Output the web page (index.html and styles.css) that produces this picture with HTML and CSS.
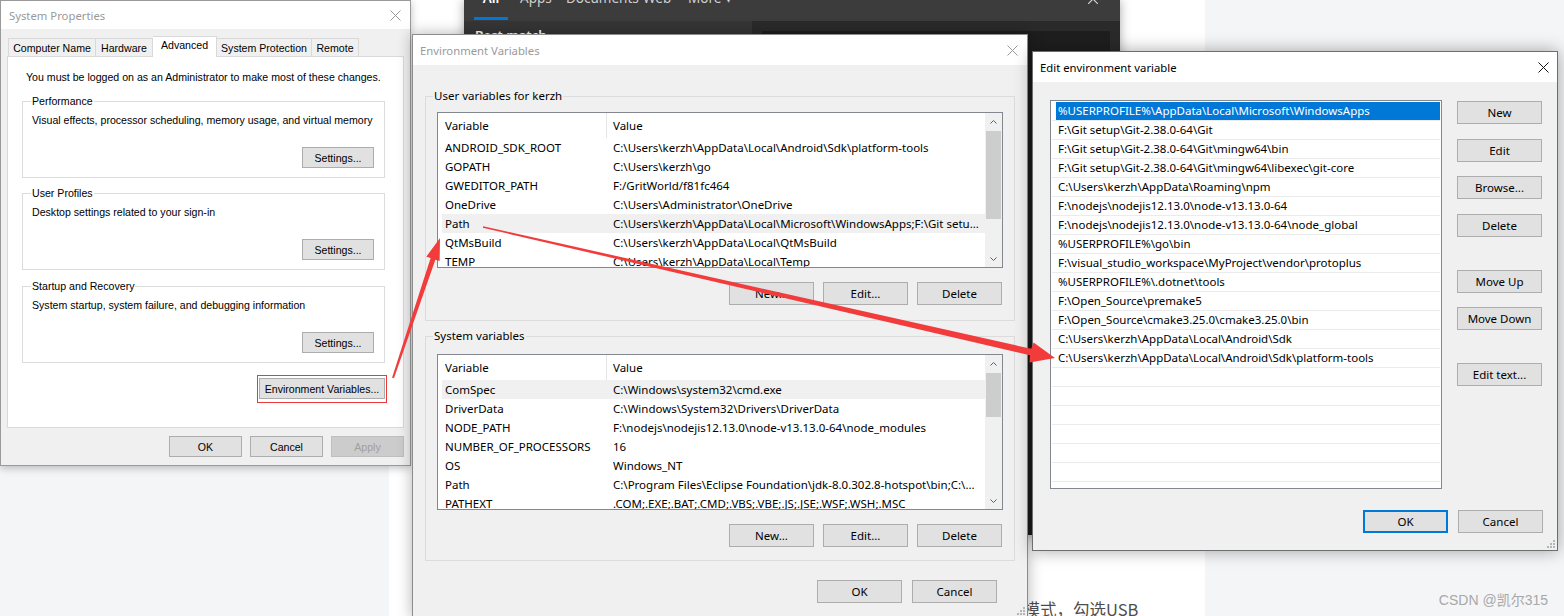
FILE: index.html
```html
<!DOCTYPE html>
<html>
<head>
<meta charset="utf-8">
<title>Environment Variables</title>
<link rel="stylesheet" href="styles.css">
</head>
<body>
<div class="page-col"></div>
<div class="article-text">者模式，勾选USB</div>
<div class="watermark">CSDN @凯尔315</div>

<div class="search-win">
  <div class="sw-head">
    <div class="sw-tabs">
      <span class="sw-tab active t1">All</span>
      <span class="sw-tab t2">Apps</span>
      <span class="sw-tab t3">Documents</span>
      <span class="sw-tab t4">Web</span>
      <span class="sw-tab t5">More ▾</span>
    </div>
    <svg class="sw-x" width="10" height="10" viewBox="0 0 10 10"><path d="M0 0L10 10M10 0L0 10" stroke="#d0d0d0" stroke-width="1.2"/></svg>
  </div>
  <div class="sw-main">
    <div class="sw-left"><div class="sw-best">Best match</div></div>
    <div class="sw-right"><div class="sw-preview"></div></div>
  </div>
</div>

<!-- System Properties -->
<div class="dlg sp">
  <div class="titlebar">
    <span class="title inactive">System Properties</span>
    <svg class="close" width="11" height="11" viewBox="0 0 11 11"><path d="M0.5 0.5L10.5 10.5M10.5 0.5L0.5 10.5" stroke="#999" stroke-width="1"/></svg>
  </div>
  <div class="sp-body">
    <div class="tabs">
      <span class="tab first w88">Computer Name</span>
      <span class="tab w57">Hardware</span>
      <span class="tab sel w64">Advanced</span>
      <span class="tab w95">System Protection</span>
      <span class="tab w47">Remote</span>
    </div>
    <div class="panel">
      <div class="note">You must be logged on as an Administrator to make most of these changes.</div>
      <div class="group g1">
        <span class="legend">Performance</span>
        <div class="desc">Visual effects, processor scheduling, memory usage, and virtual memory</div>
        <button class="btn sbtn">Settings...</button>
      </div>
      <div class="group g2">
        <span class="legend">User Profiles</span>
        <div class="desc">Desktop settings related to your sign-in</div>
        <button class="btn sbtn">Settings...</button>
      </div>
      <div class="group g3">
        <span class="legend">Startup and Recovery</span>
        <div class="desc">System startup, system failure, and debugging information</div>
        <button class="btn sbtn">Settings...</button>
      </div>
      <div class="env-row">
        <div class="redbox"><button class="btn envbtn">Environment Variables...</button></div>
      </div>
    </div>
    <div class="sp-foot">
      <button class="btn fbtn">OK</button>
      <button class="btn fbtn">Cancel</button>
      <button class="btn fbtn disabled">Apply</button>
    </div>
  </div>
</div>

<!-- Environment Variables -->
<div class="dlg ev">
  <div class="titlebar">
    <span class="title inactive">Environment Variables</span>
    <svg class="close" width="11" height="11" viewBox="0 0 11 11"><path d="M0.5 0.5L10.5 10.5M10.5 0.5L0.5 10.5" stroke="#999" stroke-width="1"/></svg>
  </div>
  <div class="ev-body">
    <div class="evgroup user">
      <span class="legend">User variables for kerzh</span>
      <div class="vlist">
        <div class="vmain">
          <div class="vhead"><span class="hvar">Variable</span><span class="hval">Value</span></div>
          <div class="vrows">
            <div class="vrow"><span class="c1">ANDROID_SDK_ROOT</span><span class="c2">C:\Users\kerzh\AppData\Local\Android\Sdk\platform-tools</span></div>
            <div class="vrow"><span class="c1">GOPATH</span><span class="c2">C:\Users\kerzh\go</span></div>
            <div class="vrow"><span class="c1">GWEDITOR_PATH</span><span class="c2">F:/GritWorld/f81fc464</span></div>
            <div class="vrow"><span class="c1">OneDrive</span><span class="c2">C:\Users\Administrator\OneDrive</span></div>
            <div class="vrow hl"><span class="c1">Path</span><span class="c2">C:\Users\kerzh\AppData\Local\Microsoft\WindowsApps;F:\Git setu...</span></div>
            <div class="vrow"><span class="c1">QtMsBuild</span><span class="c2">C:\Users\kerzh\AppData\Local\QtMsBuild</span></div>
            <div class="vrow"><span class="c1">TEMP</span><span class="c2">C:\Users\kerzh\AppData\Local\Temp</span></div>
          </div>
        </div>
        <div class="sbar">
          <div class="sb-btn"><svg width="7" height="4" viewBox="0 0 7 4"><path d="M0.5 3.5L3.5 0.5L6.5 3.5" fill="none" stroke="#606060"/></svg></div>
          <div class="sb-track"><div class="thumb t-user"></div></div>
          <div class="sb-btn"><svg width="7" height="4" viewBox="0 0 7 4"><path d="M0.5 0.5L3.5 3.5L6.5 0.5" fill="none" stroke="#606060"/></svg></div>
        </div>
      </div>
      <div class="evbtns">
        <button class="btn ebtn">New...</button>
        <button class="btn ebtn">Edit...</button>
        <button class="btn ebtn">Delete</button>
      </div>
    </div>

    <div class="evgroup sys">
      <span class="legend">System variables</span>
      <div class="vlist">
        <div class="vmain">
          <div class="vhead"><span class="hvar">Variable</span><span class="hval">Value</span></div>
          <div class="vrows">
            <div class="vrow hl"><span class="c1">ComSpec</span><span class="c2">C:\Windows\system32\cmd.exe</span></div>
            <div class="vrow"><span class="c1">DriverData</span><span class="c2">C:\Windows\System32\Drivers\DriverData</span></div>
            <div class="vrow"><span class="c1">NODE_PATH</span><span class="c2">F:\nodejs\nodejis12.13.0\node-v13.13.0-64\node_modules</span></div>
            <div class="vrow"><span class="c1">NUMBER_OF_PROCESSORS</span><span class="c2">16</span></div>
            <div class="vrow"><span class="c1">OS</span><span class="c2">Windows_NT</span></div>
            <div class="vrow"><span class="c1">Path</span><span class="c2">C:\Program Files\Eclipse Foundation\jdk-8.0.302.8-hotspot\bin;C:\...</span></div>
            <div class="vrow"><span class="c1">PATHEXT</span><span class="c2">.COM;.EXE;.BAT;.CMD;.VBS;.VBE;.JS;.JSE;.WSF;.WSH;.MSC</span></div>
          </div>
        </div>
        <div class="sbar">
          <div class="sb-btn"><svg width="7" height="4" viewBox="0 0 7 4"><path d="M0.5 3.5L3.5 0.5L6.5 3.5" fill="none" stroke="#606060"/></svg></div>
          <div class="sb-track"><div class="thumb t-sys"></div></div>
          <div class="sb-btn"><svg width="7" height="4" viewBox="0 0 7 4"><path d="M0.5 0.5L3.5 3.5L6.5 0.5" fill="none" stroke="#606060"/></svg></div>
        </div>
      </div>
      <div class="evbtns">
        <button class="btn ebtn">New...</button>
        <button class="btn ebtn">Edit...</button>
        <button class="btn ebtn">Delete</button>
      </div>
    </div>

    <div class="ev-foot">
      <button class="btn ebtn">OK</button>
      <button class="btn ebtn">Cancel</button>
    </div>
  </div>
  <svg class="grip" width="9" height="9" viewBox="0 0 9 9"><g fill="#b5b5b5"><rect x="7" y="1" width="2" height="2"/><rect x="4" y="4" width="2" height="2"/><rect x="7" y="4" width="2" height="2"/><rect x="1" y="7" width="2" height="2"/><rect x="4" y="7" width="2" height="2"/><rect x="7" y="7" width="2" height="2"/></g></svg>
</div>

<!-- Edit environment variable -->
<div class="dlg ed">
  <div class="titlebar">
    <span class="title">Edit environment variable</span>
    <svg class="close" width="11" height="11" viewBox="0 0 11 11"><path d="M0.5 0.5L10.5 10.5M10.5 0.5L0.5 10.5" stroke="#111" stroke-width="1"/></svg>
  </div>
  <div class="ed-body">
    <div class="ed-main">
      <div class="ed-list">
        <div class="ed-item sel">%USERPROFILE%\AppData\Local\Microsoft\WindowsApps</div>
        <div class="ed-item">F:\Git setup\Git-2.38.0-64\Git</div>
        <div class="ed-item">F:\Git setup\Git-2.38.0-64\Git\mingw64\bin</div>
        <div class="ed-item">F:\Git setup\Git-2.38.0-64\Git\mingw64\libexec\git-core</div>
        <div class="ed-item">C:\Users\kerzh\AppData\Roaming\npm</div>
        <div class="ed-item">F:\nodejs\nodejis12.13.0\node-v13.13.0-64</div>
        <div class="ed-item">F:\nodejs\nodejis12.13.0\node-v13.13.0-64\node_global</div>
        <div class="ed-item">%USERPROFILE%\go\bin</div>
        <div class="ed-item">F:\visual_studio_workspace\MyProject\vendor\protoplus</div>
        <div class="ed-item">%USERPROFILE%\.dotnet\tools</div>
        <div class="ed-item">F:\Open_Source\premake5</div>
        <div class="ed-item">F:\Open_Source\cmake3.25.0\cmake3.25.0\bin</div>
        <div class="ed-item">C:\Users\kerzh\AppData\Local\Android\Sdk</div>
        <div class="ed-item">C:\Users\kerzh\AppData\Local\Android\Sdk\platform-tools</div>
        <div class="ed-item"></div>
        <div class="ed-item"></div>
        <div class="ed-item"></div>
        <div class="ed-item"></div>
        <div class="ed-item"></div>
        <div class="ed-item"></div>
        <div class="ed-item"></div>
      </div>
      <div class="ed-side">
        <button class="btn ebtn">New</button>
        <button class="btn ebtn m15">Edit</button>
        <button class="btn ebtn m14">Browse...</button>
        <button class="btn ebtn m15">Delete</button>
        <button class="btn ebtn m33">Move Up</button>
        <button class="btn ebtn m14">Move Down</button>
        <button class="btn ebtn m33">Edit text...</button>
      </div>
    </div>
    <div class="ed-foot">
      <button class="btn ebtn default">OK</button>
      <button class="btn ebtn">Cancel</button>
    </div>
  </div>
  <svg class="grip" width="9" height="9" viewBox="0 0 9 9"><g fill="#b5b5b5"><rect x="7" y="1" width="2" height="2"/><rect x="4" y="4" width="2" height="2"/><rect x="7" y="4" width="2" height="2"/><rect x="1" y="7" width="2" height="2"/><rect x="4" y="7" width="2" height="2"/><rect x="7" y="7" width="2" height="2"/></g></svg>
</div>

<svg class="arrows" width="1564" height="616" viewBox="0 0 1564 616">
  <polygon fill="#f23c3c" points="392.05,377.68 430.63,258.07 426.36,256.63 440,238 439.64,261.09 435.37,259.66 393.95,378.32"/>
  <polygon fill="#f23c3c" points="483.18,226.22 1031.2,348.8 1033.6,342.4 1055,358 1029.6,362.6 1029.9,355.2 482.82,227.78"/>
</svg>
</body>
</html>
```

FILE: styles.css
```css
* { box-sizing: border-box; }
html, body { margin: 0; padding: 0; }
body {
  width: 1564px;
  height: 616px;
  overflow: hidden;
  position: relative;
  background: #f4f5f7;
  font-family: "Noto Sans", "Liberation Sans", sans-serif;
  font-size: 11.5px;
  color: #000;
}

/* desktop / web page background */
.page-col { position: absolute; left: 389px; top: 0; width: 816px; height: 616px; background: #fff; }
.article-text {
  position: absolute; left: 1007px; top: 599px;
  font: 16.5px/20px "Noto Sans CJK SC", sans-serif; color: #4d4d4d; white-space: nowrap;
}
.watermark {
  position: absolute; right: 16px; top: 591px;
  font: 14px/18px "Liberation Sans", "Noto Sans CJK SC", sans-serif; color: #a8a8a8; white-space: nowrap;
}

/* dark search window behind */
.search-win {
  position: absolute; left: 464px; top: 0; width: 656px; height: 535px;
  background: #2a2a2a; box-shadow: 0 0 10px rgba(0,0,0,0.35);
  display: flex; flex-direction: column;
}
.sw-head { height: 21px; flex: none; background: #3c3c3c; display: flex; position: relative; overflow: hidden; }
.sw-tabs { display: flex; margin-top: -11px; height: 31px; padding-left: 10px; }
.sw-tab { height: 31px; font-size: 13.5px; line-height: 18px; color: #d0d0d0; white-space: nowrap; }
.sw-tab.active { border-bottom: 3px solid #0078d7; color: #fff; font-weight: 600; text-align: center; }
.t1 { width: 34px; }
.t2 { width: 46px; margin-left: 12px; }
.t3 { width: 77px; }
.t4 { width: 45px; }
.t5 { width: 60px; }
.sw-x { position: absolute; left: 624px; top: -6px; }
.sw-main { flex: 1; display: flex; }
.sw-left { width: 288px; background: #353535; padding: 6px 0 0 11px; }
.sw-best { font-size: 13px; line-height: 16px; font-weight: 600; color: #fff; }
.sw-right { flex: 1; background: #2a2a2a; padding: 10px 10px 0 10px; }
.sw-preview { height: 100%; background: #1e1e1e; }

/* common dialog parts */
.dlg { position: absolute; background: #f0f0f0; display: flex; flex-direction: column; }
.titlebar { background: #fff; display: flex; align-items: center; justify-content: space-between; flex: none; }
.title { font-family: "Noto Sans", sans-serif; font-size: 11.3px; color: #000; white-space: nowrap; }
.title.inactive { color: #9a9a9a; }
.close { display: block; }
.btn {
  margin: 0; padding: 0;
  background: #e1e1e1; border: 1px solid #adadad; border-radius: 0;
  font: inherit; color: #000;
  display: flex; align-items: center; justify-content: center; white-space: nowrap;
}
.legend { position: absolute; white-space: nowrap; }
.grip { position: absolute; right: 2px; bottom: 2px; }

/* System Properties */
.sp {
  left: 0; top: 0; width: 411px; height: 466px;
  border: 1px solid #9a9a9a; box-shadow: 0 2px 8px rgba(0,0,0,0.25);
  font-family: "Liberation Sans", Arial, sans-serif; font-size: 10.6px;
}
.sp .titlebar { height: 28px; padding: 0 9px 0 8px; }
.sp-body { padding: 7px 6px 8px 6px; display: flex; flex-direction: column; }
.tabs { display: flex; align-items: flex-end; height: 20px; padding-left: 1px; position: relative; z-index: 1; }
.tab {
  height: 18px; background: #f0f0f0;
  border-top: 1px solid #d9d9d9; border-right: 1px solid #d9d9d9;
  display: flex; align-items: center; justify-content: center; white-space: nowrap;
}
.tab.first { border-left: 1px solid #d9d9d9; }
.tab.sel { height: 21px; margin-bottom: -1px; background: #fff; align-items: flex-start; padding-top: 2px; }
.w88 { width: 88px; } .w57 { width: 57px; } .w64 { width: 64px; } .w95 { width: 95px; } .w47 { width: 47px; }
.panel {
  height: 372px; background: #fff; border: 1px solid #d9d9d9;
  padding: 14px 0 0 14px; display: flex; flex-direction: column;
}
.note { padding-left: 4px; line-height: 13px; white-space: nowrap; }
.group {
  position: relative; width: 363px; height: 77px;
  border: 1px solid #dcdcdc; padding: 12px 10px 9px 9px;
  display: flex; flex-direction: column;
}
.group .legend { top: -7px; left: 8px; background: #fff; padding: 0 1px; line-height: 13px; }
.g1 { margin-top: 17px; }
.g2 { margin-top: 15px; }
.g3 { margin-top: 16px; }
.desc { line-height: 13px; white-space: nowrap; }
.sbtn { width: 72px; height: 21px; margin-top: auto; align-self: flex-end; }
.env-row { width: 365px; margin-top: 12px; display: flex; justify-content: flex-end; }
.redbox { border: 1px solid #e8393d; padding: 2px 1px 3px 1px; }
.envbtn { width: 126px; height: 21px; }
.sp-foot { margin-top: 8px; display: flex; justify-content: flex-end; gap: 8px; }
.fbtn { width: 73px; height: 21px; }
.fbtn.disabled { background: #cccccc; border-color: #bfbfbf; color: #a0a0a0; }

/* Environment Variables */
.ev {
  left: 412px; top: 34px; width: 616px; height: 584px;
  border: 1px solid #8c8c8c; box-shadow: 0 0 14px rgba(0,0,0,0.3);
}
.ev .titlebar { height: 30px; padding: 0 9px 0 7px; }
.ev-body { padding: 0 12px; display: flex; flex-direction: column; }
.evgroup {
  position: relative; border: 1px solid #dcdcdc;
  display: flex; flex-direction: column; padding: 15px 12px 15px 11px;
}
.evgroup .legend { top: -9px; left: 7px; background: #f0f0f0; padding: 0 1px; line-height: 16px; }
.evgroup.user { margin-top: 31px; }
.evgroup.sys { margin-top: 15px; padding-top: 17px; padding-bottom: 13px; }
.vlist { width: 566px; height: 156px; border: 1px solid #828790; background: #fff; display: flex; overflow: hidden; }
.vmain { flex: 1; display: flex; flex-direction: column; overflow: hidden; }
.vhead { height: 25px; flex: none; display: flex; align-items: stretch; }
.hvar { width: 168px; padding-left: 7px; display: flex; align-items: center; }
.hval { border-left: 1px solid #e5e5e5; padding-left: 6px; display: flex; align-items: center; }
.vrows { padding-left: 4px; }
.vrow { height: 19px; display: flex; align-items: center; white-space: nowrap; }
.vrow.hl { background: #f0f0f0; }
.c1 { width: 171px; padding-left: 3px; flex: none; }
.c2 { flex: 1; overflow: hidden; }
.sbar { width: 17px; flex: none; background: #f0f0f0; display: flex; flex-direction: column; }
.sb-btn { height: 17px; flex: none; display: flex; align-items: center; justify-content: center; }
.sb-btn svg { display: block; }
.sb-track { flex: 1; }
.thumb { margin: 1px 1px 0 1px; background: #cdcdcd; }
.t-user { height: 88px; }
.t-sys { height: 44px; }
.evbtns { margin-top: 14px; display: flex; justify-content: flex-end; gap: 9px; }
.ebtn { width: 85px; height: 23px; }
.ev-foot { margin-top: 19px; padding-right: 18px; display: flex; justify-content: flex-end; gap: 10px; }

/* Edit environment variable */
.ed {
  left: 1032px; top: 51px; width: 526px; height: 500px;
  border: 1px solid #6d6d6d; box-shadow: 0 0 16px rgba(0,0,0,0.35);
}
.ed .titlebar { height: 30px; padding: 0 8px 0 7px; }
.ed-body { padding: 18px 14px 0 17px; display: flex; flex-direction: column; }
.ed-main { display: flex; gap: 15px; }
.ed-list { width: 392px; height: 389px; border: 1px solid #828790; background: #fff; padding: 1px; overflow: hidden; }
.ed-item { height: 19px; line-height: 18px; border-bottom: 1px solid #ebebeb; padding-left: 6px; white-space: nowrap; }
.ed-item.sel { background: linear-gradient(to right, transparent 4px, #0078d7 4px); color: #fff; }
.ed-side { margin-top: 1px; display: flex; flex-direction: column; }
.m14 { margin-top: 14px; } .m15 { margin-top: 15px; } .m33 { margin-top: 33px; }
.ed-foot { margin-top: 21px; display: flex; justify-content: flex-end; gap: 10px; }
.btn.default { border: 2px solid #0078d7; }

.arrows { position: absolute; left: 0; top: 0; pointer-events: none; }
```
